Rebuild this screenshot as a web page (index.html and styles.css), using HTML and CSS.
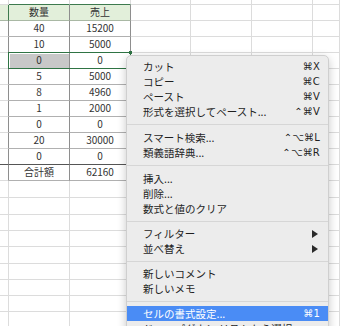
FILE: index.html
```html
<!DOCTYPE html>
<html lang="ja">
<head>
<meta charset="utf-8">
<title>Sheet</title>
<link rel="stylesheet" href="styles.css">
</head>
<body>
<div class="page">
  <div class="sheet">
    <!-- partial top row -->
    <div class="c"></div><div class="c gt"></div><div class="c gt"></div><div class="c"></div><div class="c"></div><div class="c"></div><div class="c"></div>
    <!-- header -->
    <div class="c h gl"></div><div class="c h t">数量</div><div class="c h t">売上</div><div class="c"></div><div class="c"></div><div class="c"></div><div class="c"></div>
    <div class="c l"></div><div class="c t">40</div><div class="c t">15200</div><div class="c"></div><div class="c"></div><div class="c"></div><div class="c"></div>
    <div class="c l"></div><div class="c t">10</div><div class="c t">5000</div><div class="c"></div><div class="c"></div><div class="c"></div><div class="c"></div>
    <div class="c l"></div><div class="c t sel">0</div><div class="c t">0</div><div class="c"></div><div class="c"></div><div class="c"></div><div class="c"></div>
    <div class="c l"></div><div class="c t">5</div><div class="c t">5000</div><div class="c"></div><div class="c"></div><div class="c"></div><div class="c"></div>
    <div class="c l"></div><div class="c t">8</div><div class="c t">4960</div><div class="c"></div><div class="c"></div><div class="c"></div><div class="c"></div>
    <div class="c l"></div><div class="c t">1</div><div class="c t">2000</div><div class="c"></div><div class="c"></div><div class="c"></div><div class="c"></div>
    <div class="c l"></div><div class="c t">0</div><div class="c t">0</div><div class="c"></div><div class="c"></div><div class="c"></div><div class="c"></div>
    <div class="c l"></div><div class="c t">20</div><div class="c t">30000</div><div class="c"></div><div class="c"></div><div class="c"></div><div class="c"></div>
    <div class="c l dk"></div><div class="c t dk">0</div><div class="c t dk">0</div><div class="c"></div><div class="c"></div><div class="c"></div><div class="c"></div>
    <div class="c l"></div><div class="c t">合計額</div><div class="c t">62160</div><div class="c"></div><div class="c"></div><div class="c"></div><div class="c"></div>
    <!-- empty rows -->
    <div class="c"></div><div class="c"></div><div class="c"></div><div class="c"></div><div class="c"></div><div class="c"></div><div class="c"></div>
    <div class="c"></div><div class="c"></div><div class="c"></div><div class="c"></div><div class="c"></div><div class="c"></div><div class="c"></div>
    <div class="c"></div><div class="c"></div><div class="c"></div><div class="c"></div><div class="c"></div><div class="c"></div><div class="c"></div>
    <div class="c"></div><div class="c"></div><div class="c"></div><div class="c"></div><div class="c"></div><div class="c"></div><div class="c"></div>
    <div class="c"></div><div class="c"></div><div class="c"></div><div class="c"></div><div class="c"></div><div class="c"></div><div class="c"></div>
    <div class="c"></div><div class="c"></div><div class="c"></div><div class="c"></div><div class="c"></div><div class="c"></div><div class="c"></div>
    <div class="c"></div><div class="c"></div><div class="c"></div><div class="c"></div><div class="c"></div><div class="c"></div><div class="c"></div>
    <div class="c"></div><div class="c"></div><div class="c"></div><div class="c"></div><div class="c"></div><div class="c"></div><div class="c"></div>
    <div class="c"></div><div class="c"></div><div class="c"></div><div class="c"></div><div class="c"></div><div class="c"></div><div class="c"></div>
  </div>

  <div class="selection"></div>

  <div class="menu">
    <div class="item"><span>カット</span><span class="key">⌘X</span></div>
    <div class="item"><span>コピー</span><span class="key">⌘C</span></div>
    <div class="item"><span>ペースト</span><span class="key">⌘V</span></div>
    <div class="item"><span>形式を選択してペースト...</span><span class="key">⌃⌘V</span></div>
    <div class="sep"></div>
    <div class="item"><span>スマート検索...</span><span class="key">⌃⌥⌘L</span></div>
    <div class="item"><span>類義語辞典...</span><span class="key">⌃⌥⌘R</span></div>
    <div class="sep"></div>
    <div class="item"><span>挿入...</span></div>
    <div class="item"><span>削除...</span></div>
    <div class="item"><span>数式と値のクリア</span></div>
    <div class="sep s10"></div>
    <div class="item"><span>フィルター</span><svg class="arrow" width="6" height="8" viewBox="0 0 6 8"><polygon points="0,0 6,4 0,8" fill="#2a2a2a"/></svg></div>
    <div class="item"><span>並べ替え</span><svg class="arrow" width="6" height="8" viewBox="0 0 6 8"><polygon points="0,0 6,4 0,8" fill="#2a2a2a"/></svg></div>
    <div class="sep s10"></div>
    <div class="item"><span>新しいコメント</span></div>
    <div class="item"><span>新しいメモ</span></div>
    <div class="sep s10"></div>
    <div class="item active"><span>セルの書式設定...</span><span class="key">⌘1</span></div>
    <div class="item"><span>ドロップダウン リストから選択...</span></div>
  </div>
</div>
</body>
</html>
```

FILE: styles.css
```css
html, body {
  margin: 0;
  padding: 0;
  background: #ffffff;
}

.page {
  position: relative;
  width: 340px;
  height: 326px;
  overflow: hidden;
  font-family: "Noto Sans CJK JP", "DejaVu Sans", sans-serif;
}

.sheet {
  display: grid;
  grid-template-columns: 9px 61px 61px 60px 61px 61px 1fr;
  grid-template-rows: 5px repeat(11, 16px) 17px 17px 16px 16px 17px 16px 16px 16px 16px;
  width: 340px;
}

.c {
  box-sizing: border-box;
  border-right: 1px solid #dcdcdc;
  border-bottom: 1px solid #dcdcdc;
  min-width: 0;
}

.t {
  display: flex;
  align-items: center;
  justify-content: center;
  font-size: 10px;
  line-height: 1;
  color: #333333;
  border-right-color: #8e8e8e;
  border-bottom-color: #b0b0b0;
  padding-bottom: 1px;
}

.h {
  background: #e2efda;
  border-bottom-color: #a9b8a4;
}

.gt {
  border-bottom-color: #3d7a4e;
}

.gl {
  border-right-color: #3d7a4e;
}

.l {
  border-right-color: #8e8e8e;
}

.dk {
  border-bottom-color: #555555;
}

.sel {
  background: #c8c8c8;
  box-shadow: inset 1px 1px 0 #ffffff;
}

.selection {
  position: absolute;
  left: 8px;
  top: 52px;
  width: 123px;
  height: 17px;
  box-sizing: border-box;
  border: 1px solid #2f7444;
}

.selection::after {
  content: "";
  position: absolute;
  right: -2px;
  top: -2px;
  width: 3px;
  height: 3px;
  background: #2f7444;
}

.menu {
  position: absolute;
  left: 126px;
  top: 55px;
  width: 203px;
  height: 300px;
  box-sizing: border-box;
  padding-top: 3px;
  background: #ececec;
  border: 1px solid #cfcfcf;
  border-radius: 5px;
  box-shadow: 0 3px 10px rgba(0, 0, 0, 0.22);
  display: flex;
  flex-direction: column;
  color: #1f1f1f;
  font-size: 10.5px;
}

.item {
  height: 15px;
  flex: none;
  display: flex;
  align-items: center;
  justify-content: space-between;
  padding: 0 8px 0 16px;
  white-space: nowrap;
  line-height: 15px;
}

.key {
  font-family: "DejaVu Sans", sans-serif;
  font-size: 10px;
  letter-spacing: 0.2px;
}

.arrow {
  margin-right: 2px;
}

.item.active {
  background: #4a8cf5;
  color: #ffffff;
}

.sep {
  flex: none;
  height: 1px;
  margin: 5px 0;
  background: #d6d6d6;
}

.sep.s10 {
  margin: 5px 0 4px;
}
```
